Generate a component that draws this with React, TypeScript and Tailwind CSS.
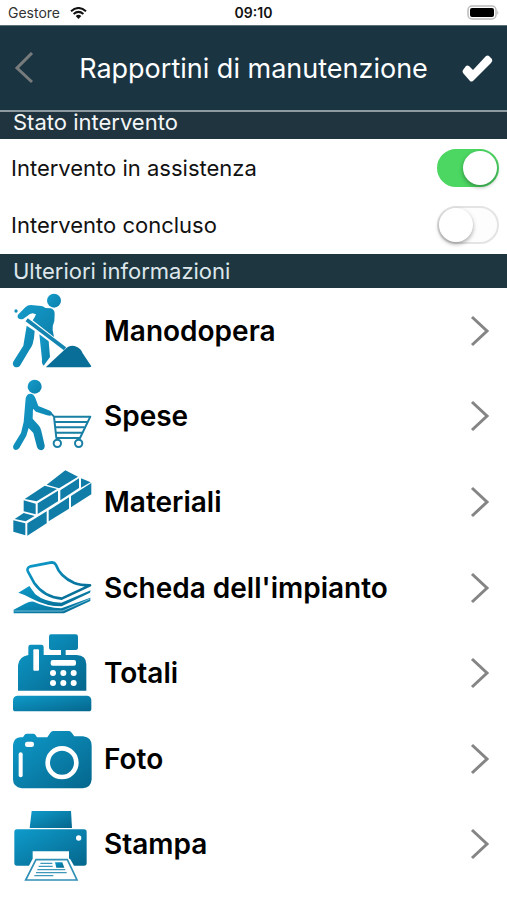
import { useState } from "react";
import type { ReactNode } from "react";

const G = "url(#blue)";
const L = "url(#light)";

function Icon({ top, fill = G, children }: { top: number; fill?: string; children: ReactNode }) {
  return (
    <svg aria-hidden="true" className="size-20 shrink-0" viewBox={`36 ${top} 240 240`} fill={fill}>
      {children}
    </svg>
  );
}

function WorkerIcon() {
  return (
    <Icon top={15} fill={L}>
      <circle cx="162" cy="44" r="21" />
      <circle cx="48" cy="75" r="5" />
      <path d="M54 86 L76 64 Q83 57 92 57 L124 60 Q132 61 136 66 L152 67 Q164 70 164 84 L163 105 Q157 119 158 132 L162 153 L98 103 L104 94 L108 85 L98 82 L90 84 L69 99 Q60 102 54 96 Q51 91 54 86 Z" />
      <path d="M80 119 L104 135 Q103 158 98 174 Q94 185 88 192 L60 239 Q53 247 43 242 Q35 236 41 225 L70 179 Z" />
      <path d="M118 145 L146 166 L150 213 L131 239 Q124 233 126 220 Z" />
      <path d="M80 101 L195 188" fill="none" stroke="#1385b0" strokeWidth="11" />
      <path d="M138 243 L200 185 Q214 175 231 183 Q242 187 248 202 L274 241 Q273 244 267 244 H139 Z" fill="#0a6f98" />
    </Icon>
  );
}

function CartIcon() {
  return (
    <Icon top={13} fill={L}>
      <circle cx="104" cy="45" r="21" />
      <path d="M77 80 Q80 66 91 66 Q101 66 106 79 L115 103 L150 117 Q158 122 155 130 Q151 134 141 131 L108 120 L99 111 L98 141 L117 162 Q122 168 124 178 L134 221 Q135 233 125 236 Q115 236 111 226 L100 184 L86 169 L79 192 L58 229 Q50 238 42 233 Q36 226 43 216 L63 184 L71 151 Z" />
      <g fill="none" stroke="#197fa5" strokeWidth="6" strokeLinejoin="round">
        <path d="M150 122 L162 135 H271 L240 199 H169 L162 135" />
        <path d="M164 151 H262 M166 167 H254 M168 183 H247" />
        <circle cx="172" cy="215" r="11" />
        <circle cx="236" cy="215" r="11" />
      </g>
    </Icon>
  );
}

function BricksIcon() {
  return (
    <Icon top={6} fill="#0f7da8">
      <path d="M140 74 L196 31 L234 50 L177 85 Z" />
      <path d="M181 91 L237 55 V84 L181 121 Z" />
      <path d="M243 55 L272 67 L243 83 Z" />
      <path d="M74 117 L134 77 L171 87 L110 124 Z" />
      <path d="M71 121 L107 131 V163 L71 154 Z" />
      <path d="M113 130 L174 92 V124 L113 162 Z" />
      <path d="M44 177 L71 159 L104 168 L77 184 Z" />
      <path d="M40 181 L76 190 V226 L40 215 Z" />
      <path d="M82 190 L140 154 V190 L82 227 Z" />
      <path d="M146 151 L207 112 V146 L146 184 Z" />
      <path d="M213 108 L274 69 V103 L213 142 Z" />
    </Icon>
  );
}

function PapersIcon() {
  return (
    <Icon top={-7}>
      <path d="M41 178 L75 160 Q92 151 101 154 Q141 172 184 174 L271 142 V152 L192 189 H41 Z" />
      <path d="M55 127 L88 107 L106 132 Q135 156 184 157 L272 120 L270 127 L185 168 Q140 168 96 145 Q76 133 55 127 Z" />
      <path d="M83 55 Q84 51 92 48 L155 36 Q164 36 168 44 Q180 79 223 98 Q240 105 270 105 L185 145 Q131 139 102 97 L84 64 Q81 59 83 55 Z" fill="#fff" stroke={G} strokeWidth="8" strokeLinejoin="round" />
      <path d="M43 182 H188 L269 146" fill="none" stroke="#79bad4" strokeWidth="3" />
    </Icon>
  );
}

function RegisterIcon() {
  return (
    <Icon top={21}>
      <path d="M153 25 H227 Q234 25 234 32 V64 Q234 72 227 72 H197 V87 H230 Q259 88 259 115 V194 H54 V118 Q57 91 85 87 V63 Q85 56 92 56 H124 Q131 56 131 63 V87 H183 V72 H154 Q147 72 147 64 V32 Q147 25 153 25 Z" />
      <path d="M52 209 H262 Q274 211 274 224 V248 Q274 256 266 256 H47 Q39 256 39 248 V224 Q39 211 52 209 Z" />
      <g fill="#fff">
        <rect x="100" y="70" width="17" height="64" rx="3" />
        <rect x="152" y="102" width="76" height="17" rx="6" />
        <circle cx="159" cy="141" r="9" />
        <circle cx="190" cy="141" r="9" />
        <circle cx="221" cy="141" r="9" />
        <circle cx="159" cy="171" r="9" />
        <circle cx="190" cy="171" r="9" />
        <circle cx="221" cy="171" r="9" />
      </g>
    </Icon>
  );
}

function CameraIcon() {
  return (
    <Icon top={-10}>
      <path d="M60 45 H69 L74 37 Q76 34 81 34 H101 Q105 34 107 39 L111 45 H142 L151 31 Q154 26 160 26 H207 Q212 26 215 31 L223 42 H249 Q275 45 275 70 V171 Q273 197 248 198 H65 Q39 194 39 171 V69 Q41 47 60 45 Z" />
      <rect x="75" y="58" width="27" height="16" rx="7" fill="#fff" />
      <rect x="56" y="90" width="12" height="75" rx="6" fill="#fff" />
      <circle cx="186" cy="121" r="43" fill="none" stroke="#fff" strokeWidth="14" />
    </Icon>
  );
}

function PrinterIcon() {
  return (
    <Icon top={12}>
      <path d="M95 33 H213 L216 84 H89 Z" />
      <path d="M51 88 H252 Q260 88 260 96 V189 Q260 197 252 197 H222 L210 176 H207 V154 H98 V176 L87 197 H51 Q43 197 43 189 V96 Q43 88 51 88 Z" />
      <circle cx="236" cy="114" r="8" fill="#fff" />
      <path d="M108 179 H202 L231 240 H77 Z" fill="#fff" stroke="#2f8fb5" strokeWidth="5" />
      <path d="M165 187 H187 L193 203 H169 Z" />
      <path d="M121 190 H157 M116 199 H158 M112 209 H196 M108 218 H200 M103 227 H160" fill="none" stroke="#3f98ba" strokeWidth="4" />
    </Icon>
  );
}

const items = [
  { label: "Manodopera", icon: <WorkerIcon /> },
  { label: "Spese", icon: <CartIcon /> },
  { label: "Materiali", icon: <BricksIcon /> },
  { label: "Scheda dell'impianto", icon: <PapersIcon /> },
  { label: "Totali", icon: <RegisterIcon /> },
  { label: "Foto", icon: <CameraIcon /> },
  { label: "Stampa", icon: <PrinterIcon /> },
];

function Toggle({ label, initial }: { label: string; initial: boolean }) {
  const [on, setOn] = useState(initial);
  return (
    <label className="flex h-[57px] items-center justify-between pr-2 pl-[11px] text-[22px] leading-7">
      <span>{label}</span>
      <input
        type="checkbox"
        role="switch"
        checked={on}
        onChange={() => setOn(!on)}
        className="flex h-[38px] w-[62px] shrink-0 appearance-none items-center rounded-full border-2 border-[#e4e4e4] bg-[#fdfdfd] before:size-[34px] before:rounded-full before:bg-white before:shadow-[0_2px_4px_rgba(0,0,0,0.35)] checked:justify-end checked:border-[#4cd662] checked:bg-[#4cd662]"
      />
    </label>
  );
}

export default function App() {
  return (
    <div className="flex min-h-screen flex-col bg-white font-['Inter','Liberation_Sans',sans-serif] text-[#111]">
      <svg aria-hidden="true" className="absolute size-0">
        <defs>
          <linearGradient id="blue" x1="0" y1="0" x2="1" y2="1">
            <stop offset="0" stopColor="#0e9bcb" />
            <stop offset="1" stopColor="#05668c" />
          </linearGradient>
          <linearGradient id="light" x1="0" y1="0" x2="1" y2="1">
            <stop offset="0" stopColor="#169bca" />
            <stop offset="1" stopColor="#0c80ab" />
          </linearGradient>
        </defs>
      </svg>

      <div className="grid h-[25px] grid-cols-3 items-center px-2 text-sm">
        <div className="flex items-center gap-2.5">
          <span className="text-[#333]">Gestore</span>
          <svg aria-label="Wi-Fi" role="img" className="h-3 w-[17px]" viewBox="0 0 17 12" fill="none" stroke="#111" strokeWidth="2">
            <path d="M1 4.2 Q8.500 -2.200 16 4.200 M3.600 7 Q8.500 2.800 13.400 7" />
            <path d="M5.700 9 Q8.500 6.600 11.300 9 L8.500 12 Z" fill="#111" stroke="none" />
          </svg>
        </div>
        <span className="text-center font-semibold">09:10</span>
        <svg aria-label="Batteria" role="img" className="h-[15px] w-8 justify-self-end" viewBox="0 0 32 15">
          <rect x="1" y="1" width="28" height="13" rx="4" fill="#fff" stroke="#bbb" strokeWidth="1.500" />
          <rect x="3" y="3" width="24" height="9" rx="2" fill="#000" />
          <path d="M30.500 5 Q32 7.500 30.500 10 Z" fill="#999" />
        </svg>
      </div>

      <header className="flex h-[87px] items-center justify-between border-t border-b-2 border-t-[#5d717b] border-b-[#8d9ba1] bg-[#1a3442] px-[14px] pt-0.5 text-white">
        <button type="button" aria-label="Indietro" className="w-8">
          <svg className="h-[34px] w-5" viewBox="0 0 20 34" fill="none" stroke="#777b7c" strokeWidth="3">
            <path d="M18 1 L3 16 L18 30" />
          </svg>
        </button>
        <h1 className="text-[27px] leading-8 whitespace-nowrap">Rapportini di manutenzione</h1>
        <button type="button" aria-label="Conferma" className="w-8">
          <svg className="h-7 w-8" viewBox="0 0 32 28" fill="#fff">
            <path d="M2 15 L5 11 Q6 10 8 11 L12 15 L25 1 Q27 0 28 1 L31 4 Q32 6 30 8 L12 26 Q10 27 9 26 L2 18 Q1 16 2 15 Z" />
          </svg>
        </button>
      </header>

      <h2 className="h-[27px] bg-[#20343f] px-[13px] text-[22px] leading-5 text-[#f4f7f8]">Stato intervento</h2>
      <section className="pb-px">
        <Toggle label="Intervento in assistenza" initial={true} />
        <Toggle label="Intervento concluso" initial={false} />
      </section>
      <h2 className="h-[34px] bg-[#1e363f] px-[13px] text-[22px] leading-[34px] text-[#dde7ec]">Ulteriori informazioni</h2>

      <ul className="flex flex-1 flex-col pb-[13px]">
        {items.map((item) => (
          <li key={item.label} className="flex flex-1">
            <button type="button" className="flex flex-1 items-center gap-3 pr-[17px] pl-3 text-left">
              {item.icon}
              <span className="flex-1 text-[28px] leading-8 font-semibold text-black">{item.label}</span>
              <svg aria-hidden="true" className="h-8 w-5" viewBox="0 0 20 32" fill="none" stroke="#858585" strokeWidth="3">
                <path d="M2 2 L17 16 L2 30" />
              </svg>
            </button>
          </li>
        ))}
      </ul>
    </div>
  );
}
